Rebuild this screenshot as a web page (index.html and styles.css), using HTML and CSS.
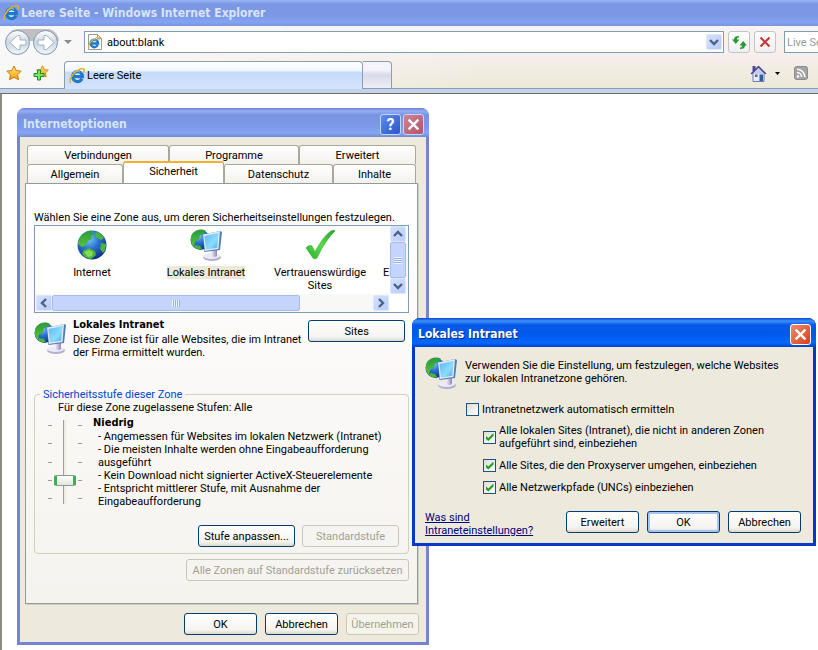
FILE: index.html
```html
<!DOCTYPE html>
<html lang="de">
<head>
  <meta charset="UTF-8" />
  <meta name="viewport" content="width=device-width, initial-scale=1.0" />
  <title>Leere Seite - Windows Internet Explorer</title>
  <link rel="stylesheet" href="styles.css">
</head>
<body>

  <!-- shared icons -->
  <svg class="icon-defs" width="0" height="0" aria-hidden="true">
    <defs>
      <radialGradient id="sea" cx="0.4" cy="0.3" r="0.75">
        <stop offset="0" stop-color="#7cc4f8" />
        <stop offset="0.45" stop-color="#2a72d0" />
        <stop offset="1" stop-color="#0a2a7c" />
      </radialGradient>
      <linearGradient id="land" x1="0" y1="0" x2="0" y2="1">
        <stop offset="0" stop-color="#2a9a3c" />
        <stop offset="1" stop-color="#58c438" />
      </linearGradient>
      <linearGradient id="screen" x1="0" y1="0" x2="1" y2="1">
        <stop offset="0" stop-color="#5cb4f4" />
        <stop offset="0.6" stop-color="#8cdcff" />
        <stop offset="1" stop-color="#4aa8ec" />
      </linearGradient>
      <linearGradient id="foot" x1="0" y1="0" x2="1" y2="0">
        <stop offset="0" stop-color="#f4f2fa" />
        <stop offset="1" stop-color="#9088b8" />
      </linearGradient>
      <linearGradient id="glass" x1="0" y1="0" x2="0" y2="1">
        <stop offset="0" stop-color="#ffffff" />
        <stop offset="0.5" stop-color="#ccd6e0" />
        <stop offset="1" stop-color="#eef8fc" />
      </linearGradient>
      <linearGradient id="gold" x1="0" y1="0" x2="0" y2="1">
        <stop offset="0" stop-color="#ffe878" />
        <stop offset="1" stop-color="#f49a10" />
      </linearGradient>
      <linearGradient id="tick" x1="0" y1="1" x2="1" y2="0">
        <stop offset="0" stop-color="#28b028" />
        <stop offset="0.5" stop-color="#5cdc4c" />
        <stop offset="1" stop-color="#2c9c2c" />
      </linearGradient>
    </defs>
    <symbol id="i-ie" viewBox="0 0 16 16">
      <circle cx="8.500" cy="8.500" r="4" fill="#d4ecfc" />
      <path d="M13 10.800A5 5 0 1 1 13.500 8.600H4.600" fill="none" stroke="#2379c8" stroke-width="3.200" />
      <path d="M4.200 5.600A5 5 0 0 1 11 4.200" fill="none" stroke="#6fc2f0" stroke-width="1.300" />
      <path d="M1.600 15C-.6 12.600 3 6.400 7.400 3.200 11 .6 14.600-.2 15.200 1.600c.3 1-.2 2-.8 3" fill="none" stroke="#e8b020" stroke-width="1.500" />
    </symbol>
    <symbol id="i-globe" viewBox="0 0 32 32">
      <circle cx="16" cy="16" r="14.500" fill="url(#sea)" />
      <path d="M5 7c3-4 8-6 11-5l2 3-3 2 1 3-4 2-2 4-4 2-4-3c0-3 1-6 3-8z" fill="url(#land)" />
      <path d="M20 3c4 1 7 4 8 6l-3 2-4-2-2-3zM25 14l5 1c0 4-1 7-3 9l-3-4zM8 21l5-2 6 3 1 4-5 4c-4 0-8-3-9-6z" fill="#4cb43c" />
      <path d="M8 23l5-2 4 2-1 4-4 1z" fill="#86da54" />
    </symbol>
    <symbol id="i-network" viewBox="0 0 32 32">
      <circle cx="10.500" cy="11" r="10" fill="url(#sea)" />
      <path d="M2 5c3-4 9-6 14-3l-2 3-4 1-1 4-4 3-1 5C1 15-.5 10 2 5z" fill="url(#land)" />
      <path d="M5 16l5 1 2 3c-3 1-6 0-8-2z" fill="#4cb43c" />
      <ellipse cx="22" cy="28.500" rx="9" ry="3.400" fill="#b4aed0" />
      <ellipse cx="21.500" cy="27" rx="8.500" ry="3" fill="#eceaf6" />
      <path d="M21 20h6v7c-1 1.200-5 1.200-6 0z" fill="url(#foot)" />
      <path d="M13 5.500L30 2l2 1-2 18-15.500 2z" fill="#4e7cb4" />
      <path d="M13 5.500L30 2l-1.500 18L15 22z" fill="#e0e8f2" />
      <path d="M14.500 7L28.500 4 27.200 18.700 16 20.400z" fill="url(#screen)" />
    </symbol>
    <symbol id="i-check" viewBox="0 0 32 32">
      <path d="M2 19c1-2 4-3 6-2l3 6C15 15 21 6 27 2c1-1 4-1 4 0C24 9 18 18 13 29c-1 1-3 1-4 0z" fill="url(#tick)" stroke="#38a838" stroke-width="0.600" />
    </symbol>
    <symbol id="i-star" viewBox="0 0 16 16">
      <path d="M8 1l2.200 4.500 5 .7-3.600 3.500.9 5L8 12.400 3.500 14.700l.9-5L.8 6.200l5-.7z" fill="url(#gold)" stroke="#c87c10" stroke-linejoin="round" />
    </symbol>
    <symbol id="i-close" viewBox="0 0 12 12">
      <path d="M1.500 1.500l9 9M10.500 1.500l-9 9" stroke="currentColor" stroke-width="2.200" />
    </symbol>
    <symbol id="i-arrow" viewBox="0 0 10 10">
      <path d="M1 3l4 4 4-4" fill="none" stroke="#4d6185" stroke-width="2.400" />
    </symbol>
  </svg>

  <div class="browser">
    <header class="browser-title">
      <svg class="ie"><use href="#i-ie" /></svg>
      <span>Leere Seite - Windows Internet Explorer</span>
    </header>

    <div class="chrome">
      <div class="nav-row">
        <button class="plain" aria-label="Zurück und Vorwärts">
          <svg width="56" height="28" viewBox="0 0 56 28">
            <path d="M13 1h32a13 13 0 0 1 10 12H2A13 13 0 0 1 13 1z" fill="#bfbfc4" />
            <g fill="url(#glass)" stroke="#8496ac">
              <circle cx="13.500" cy="14.500" r="12" />
              <circle cx="41.500" cy="14.500" r="12" />
            </g>
            <g fill="#fff" stroke="#a4b2c2">
              <path d="M6 14.500l7.500-7h2.500v4.500h6v5h-6v4.500h-2.500z" />
              <path d="M50 14.500l-7.500-7H40v4.500h-6v5h6v4.500h2.500z" />
            </g>
          </svg>
        </button>
        <button class="plain history" aria-label="Verlauf">
          <svg width="8" height="4" viewBox="0 0 8 4"><path d="M0 0h8L4 4z" fill="#8a8a8a" /></svg>
        </button>
        <div class="address">
          <svg width="16" height="18" viewBox="0 0 16 18">
            <path d="M1.500 1.500h9l4 4v11h-13z" fill="#fff" stroke="#999" />
            <path d="M10.500 1.500v4h4" fill="none" stroke="#999" />
            <use href="#i-ie" x="1" y="4" width="12" height="12" />
          </svg>
          <input type="text" value="about:blank" aria-label="Adresse">
          <button class="scroll-btn address-drop" aria-label="Adressen anzeigen"><svg><use href="#i-arrow" /></svg></button>
        </div>
        <button class="tool" aria-label="Aktualisieren">
          <svg width="15" height="13" viewBox="0 0 15 13" fill="#2a9a34">
            <path d="M7 1.500C5.500 1.500 5 2 5 3.500h2.500L3.800 8 0 3.500h2C2 1 3.500 0 7 0z" />
            <path d="M8 11.500c1.500 0 2-.5 2-2H7.500L11.200 5 15 9.500h-2c0 2.500-1.500 3.500-5 3.500z" />
          </svg>
        </button>
        <button class="tool stop" aria-label="Abbrechen"><svg width="12" height="12"><use href="#i-close" /></svg></button>
        <input class="search" type="text" placeholder="Live Search" aria-label="Suche">
      </div>

      <div class="tab-row">
        <button class="plain" aria-label="Favoritencenter"><svg width="16" height="16"><use href="#i-star" /></svg></button>
        <button class="plain add-favorite" aria-label="Zu Favoriten hinzufügen">
          <svg width="16" height="16" viewBox="0 0 16 16">
            <use href="#i-star" x="3" y="0" width="13" height="13" />
            <path d="M4.500 5h3v3.500H11v3H7.500V15h-3v-3.500H1v-3h3.500z" fill="#7ce060" stroke="#1e8c1e" />
          </svg>
        </button>
        <button class="page-tab"><svg class="ie"><use href="#i-ie" /></svg>Leere Seite</button>
        <button class="new-tab" aria-label="Neue Registerkarte"></button>
        <div class="page-tools">
          <button class="plain" aria-label="Startseite">
            <svg width="17" height="17" viewBox="0 0 17 17">
              <path d="M3 8l5.500-6L14 8v8.500H3z" fill="#e8ecf8" stroke="#6c7cb8" />
              <path d="M2.500 1h3v4l-3 2.500zM.5 8.500l8-8 8 8-1.500 1-6.500-6.500L2 9.500z" fill="#4a4a94" />
              <path d="M8.500 3l6 6H2.500z" fill="#c4ccec" />
              <path d="M9.500 9.500h3.500v6.500H9.500z" fill="#2860a0" />
              <path d="M5 9.500h2.500V12H5z" fill="#666" />
            </svg>
          </button>
          <button class="plain" aria-label="Startseitenmenü">
            <svg width="5" height="3" viewBox="0 0 5 3"><path d="M0 0h5L2.500 3z" /></svg>
          </button>
          <button class="plain feed" aria-label="Feeds">
            <svg width="14" height="14" viewBox="0 0 14 14">
              <rect x="0.500" y="0.500" width="13" height="13" rx="2" fill="#a4a4a4" stroke="#8c8c8c" />
              <circle cx="4" cy="10.500" r="1.300" fill="#fff" />
              <path d="M3 6.500a4.500 4.500 0 0 1 4.500 4.500M3 3.200A7.800 7.800 0 0 1 10.800 11" fill="none" stroke="#fff" stroke-width="1.500" />
            </svg>
          </button>
        </div>
      </div>
    </div>
    <main class="page"></main>
  </div>

  <section class="window options" aria-label="Internetoptionen">
    <header class="window-title">
      <h1>Internetoptionen</h1>
      <button class="caption-btn" aria-label="Hilfe">?</button>
      <button class="caption-btn caption-close" aria-label="Schließen"><svg width="13" height="13"><use href="#i-close" /></svg></button>
    </header>
    <div class="options-body">
      <div class="tabs tabs-back">
        <button>Verbindungen</button>
        <button>Programme</button>
        <button>Erweitert</button>
      </div>
      <div class="tabs tabs-front">
        <button>Allgemein</button>
        <button class="active">Sicherheit</button>
        <button>Datenschutz</button>
        <button>Inhalte</button>
      </div>

      <div class="panel">
        <p>Wählen Sie eine Zone aus, um deren Sicherheitseinstellungen festzulegen.</p>

        <div class="zones">
          <ul class="zone-list">
            <li><svg><use href="#i-globe" /></svg><span>Internet</span></li>
            <li class="selected"><svg><use href="#i-network" /></svg><span>Lokales Intranet</span></li>
            <li><svg><use href="#i-check" /></svg><span>Vertrauenswürdige<br>Sites</span></li>
            <li><svg></svg><span>Eingeschränkte Sites</span></li>
          </ul>
          <div class="vscroll">
            <button class="scroll-btn up" aria-label="Nach oben"><svg><use href="#i-arrow" /></svg></button>
            <div class="thumb"></div>
            <button class="scroll-btn" aria-label="Nach unten"><svg><use href="#i-arrow" /></svg></button>
          </div>
          <div class="hscroll">
            <button class="scroll-btn left" aria-label="Nach links"><svg><use href="#i-arrow" /></svg></button>
            <div class="thumb"></div>
            <button class="scroll-btn right" aria-label="Nach rechts"><svg><use href="#i-arrow" /></svg></button>
          </div>
        </div>

        <div class="zone-info">
          <svg class="big-icon"><use href="#i-network" /></svg>
          <div class="zone-text">
            <h2>Lokales Intranet</h2>
            <p>Diese Zone ist für alle Websites, die im Intranet<br>der Firma ermittelt wurden.</p>
          </div>
          <button class="btn wide">Sites</button>
        </div>

        <fieldset class="level">
          <legend>Sicherheitsstufe dieser Zone</legend>
          <label for="level">Für diese Zone zugelassene Stufen: Alle</label>
          <div class="level-row">
            <div class="slider">
              <div class="ticks"><i></i><i></i><i></i><i></i><i></i></div>
              <input type="range" id="level" min="0" max="4" value="1">
              <div class="ticks"><i></i><i></i><i></i><i></i><i></i></div>
            </div>
            <div>
              <h2>Niedrig</h2>
              <p class="level-text">
                - Angemessen für Websites im lokalen Netzwerk (Intranet)<br>
                - Die meisten Inhalte werden ohne Eingabeaufforderung<br>
                ausgeführt<br>
                - Kein Download nicht signierter ActiveX-Steuerelemente<br>
                - Entspricht mittlerer Stufe, mit Ausnahme der<br>
                Eingabeaufforderung
              </p>
            </div>
          </div>
          <div class="level-buttons">
            <button class="btn wide">Stufe anpassen...</button>
            <button class="btn wide" disabled>Standardstufe</button>
          </div>
        </fieldset>
        <button class="btn reset" disabled>Alle Zonen auf Standardstufe zurücksetzen</button>
      </div>

      <footer class="buttons">
        <button class="btn">OK</button>
        <button class="btn">Abbrechen</button>
        <button class="btn" disabled>Übernehmen</button>
      </footer>
    </div>
  </section>

  <section class="window intranet" aria-label="Lokales Intranet">
    <header class="window-title">
      <h1>Lokales Intranet</h1>
      <button class="caption-btn caption-close" aria-label="Schließen"><svg width="13" height="13"><use href="#i-close" /></svg></button>
    </header>
    <div class="intranet-body">
      <div class="intro">
        <svg class="big-icon"><use href="#i-network" /></svg>
        <p>Verwenden Sie die Einstellung, um festzulegen, welche Websites<br>zur lokalen Intranetzone gehören.</p>
      </div>
      <div class="checks">
        <label><input type="checkbox">Intranetnetzwerk automatisch ermitteln</label>
        <label class="sub"><input type="checkbox" checked><span>Alle lokalen Sites (Intranet), die nicht in anderen Zonen<br>aufgeführt sind, einbeziehen</span></label>
        <label class="sub"><input type="checkbox" checked>Alle Sites, die den Proxyserver umgehen, einbeziehen</label>
        <label class="sub"><input type="checkbox" checked>Alle Netzwerkpfade (UNCs) einbeziehen</label>
      </div>
      <footer class="buttons">
        <a href="#">Was sind<br>Intraneteinstellungen?</a>
        <button class="btn">Erweitert</button>
        <button class="btn default">OK</button>
        <button class="btn">Abbrechen</button>
      </footer>
    </div>
  </section>

</body>
</html>
```

FILE: styles.css
```css
* {
  box-sizing: border-box;
}
body {
  margin: 0;
  height: 100vh;
  overflow: hidden;
  position: relative;
  color: #000;
  font-family: Roboto, Tahoma, sans-serif;
  font-size: 11px;
  line-height: 13px;
}
h1, h2, p, ul, fieldset {
  margin: 0;
  padding: 0;
}
h1, h2, .browser-title {
  font-family: "DejaVu Sans Condensed", Tahoma, sans-serif;
  font-weight: bold;
}
h2 {
  font-size: 11px;
  line-height: 13px;
}
svg {
  display: block;
  flex: none;
}
button, input {
  font: inherit;
  color: inherit;
  margin: 0;
}
button {
  padding: 0;
}
.icon-defs {
  position: absolute;
}
.plain {
  border: 0;
  background: none;
}
.ie {
  width: 16px;
  height: 16px;
}

/* browser window */
.browser {
  display: flex;
  flex-direction: column;
  height: 100%;
  background: #c4d2ec;
}
.browser-title {
  display: flex;
  align-items: center;
  gap: 2px;
  height: 26px;
  padding-left: 3px;
  background: linear-gradient(#9ab8f6 0, #7a98e4 4px, #7c98e4 16px, #84a4f4 22px, #7a94dc);
  color: #d8e4f8;
  font-size: 12px;
}
.chrome {
  background: linear-gradient(to right, #f8f8f8, rgba(248, 248, 248, 0) 60%), linear-gradient(#f8f4f2, #f6eeea 50%, #ece9d8);
}
.nav-row {
  display: flex;
  align-items: center;
  height: 32px;
  padding-left: 4px;
}
.history {
  padding: 0 12px 0 4px;
}
.address {
  display: flex;
  flex: 1;
  align-items: center;
  height: 22px;
  padding: 0 1px 0 2px;
  border: 1px solid #7f9db9;
  background: #fff;
}
.address input {
  flex: 1;
  min-width: 0;
  padding: 0 4px;
  border: 0;
  background: none;
}
.address-drop {
  height: 18px;
}
.tool {
  display: flex;
  align-items: center;
  justify-content: center;
  width: 22px;
  height: 22px;
  margin-left: 4px;
  border: 1px solid #c0c4cc;
  border-radius: 3px;
  background: linear-gradient(#fff, #f0eeee);
}
.stop {
  color: #c43c3c;
}
/* runs off the right edge of the window */
.search {
  width: 34px;
  height: 22px;
  margin-left: 8px;
  padding: 0 0 0 2px;
  border: 1px solid #7f9db9;
  border-right: 0;
  background: #fff;
}
.search::placeholder {
  color: #999;
}
.tab-row {
  display: flex;
  align-items: center;
  height: 31px;
  padding-left: 6px;
  border-bottom: 1px solid #8e9cb0;
}
.add-favorite {
  margin: 0 15px 0 11px;
}
.page-tab {
  display: flex;
  align-items: center;
  align-self: flex-end;
  gap: 2px;
  width: 299px;
  height: 28px;
  margin-bottom: -1px;
  padding-left: 4px;
  border: 1px solid #8e9cb0;
  border-bottom: 0;
  border-radius: 4px 4px 0 0;
  background: linear-gradient(#fff 0, #f0f6fe 9px, #c4dafc 10px, #d4e4fc);
}
.new-tab {
  align-self: flex-end;
  width: 29px;
  height: 27px;
  border: 1px solid #8e9cb0;
  border-left: 0;
  border-bottom: 0;
  border-radius: 0 4px 0 0;
  background: linear-gradient(#f4f4fa 30%, #d8daea 50%, #eeeef6);
}
.page-tools {
  display: flex;
  align-items: center;
  gap: 8px;
  margin-left: auto;
  padding-right: 10px;
}
.feed {
  margin-left: 6px;
}
.page {
  flex: 1;
  margin-top: 4px;
  border-top: 1px solid #6f6f60;
  border-left: 2px solid #8c8c84;
  background: #fff;
}

/* dialog windows */
.window {
  position: absolute;
  border-radius: 8px 8px 0 0;
}
.window-title {
  display: flex;
  align-items: center;
  gap: 2px;
  height: 29px;
  margin: 0 -3px;
  padding: 3px 5px 0 6px;
  border-radius: 8px 8px 0 0;
}
.window-title h1 {
  flex: 1;
  font-size: 12px;
}
.caption-btn {
  display: flex;
  align-items: center;
  justify-content: center;
  width: 21px;
  height: 21px;
  border: 1px solid #fff;
  border-radius: 3px;
  background: linear-gradient(135deg, #5c8cf0, #2c54c8);
  color: #fff;
  font-size: 16px;
  font-weight: bold;
}
.caption-close {
  background: linear-gradient(135deg, #ec8c6c, #d8401c);
}
.options {
  left: 17px;
  top: 108px;
  width: 412px;
  padding: 0 3px 3px;
  background: #7484d0;
}
.options .window-title {
  background: linear-gradient(#6c80cc 0, #94aef4 3px, #7894e0 7px, #7c9ae8 18px, #84a4f4 25px, #748cd4);
  color: #d8e4f8;
}
.options .caption-btn {
  border-color: #c8d4f8;
}
.options .caption-close {
  background: linear-gradient(135deg, #cc8494, #b45468);
}
.options-body {
  padding: 8px 8px 7px 5px;
  background: #edeadd;
}
.tabs {
  display: grid;
  padding: 0 2px;
}
.tabs button {
  height: 19px;
  border: 1px solid #a8a89c;
  border-bottom: 0;
  border-radius: 3px 3px 0 0;
  background: linear-gradient(#fff, #f2f1ec);
}
.tabs-back {
  grid-template-columns: 142fr 130fr 117fr;
}
.tabs-front {
  grid-template-columns: 96fr 101fr 109fr 83fr;
}
.tabs-front .active {
  height: 22px;
  margin: -3px 0 -1px;
  padding-bottom: 3px;
  border-top: 2px solid #f0b030;
  background: #fff;
  z-index: 1;
}
.panel {
  padding: 27px 8px 22px;
  border: 1px solid #919b9c;
  box-shadow: 1px 1px #d0cec0;
  background: linear-gradient(#fff 0, #fcfbfa 30%, #f5f3ee);
}

/* zone list */
.zones {
  display: grid;
  grid-template-columns: 1fr 18px;
  grid-template-rows: 68px 18px;
  margin-top: 1px;
  border: 1px solid #7f9db9;
  background: #fff;
}
.zone-list {
  display: flex;
  overflow: hidden;
  list-style: none;
}
.zone-list li {
  display: flex;
  flex: 0 0 114px;
  flex-direction: column;
  align-items: center;
  gap: 5px;
  padding-top: 3px;
  text-align: center;
  white-space: nowrap;
}
.zone-list svg {
  width: 32px;
  height: 32px;
}
.selected span {
  background: #ece9d8;
}
.vscroll, .hscroll {
  display: flex;
  background: #f8f8f6;
}
.vscroll {
  flex-direction: column;
}
.scroll-btn {
  display: flex;
  flex: none;
  align-items: center;
  justify-content: center;
  width: 16px;
  height: 16px;
  border: 1px solid #dce6fc;
  border-radius: 2px;
  background: linear-gradient(135deg, #d4e0fe, #b8ccf8);
}
.scroll-btn svg {
  width: 10px;
  height: 10px;
}
.up svg {
  transform: rotate(180deg);
}
.left svg {
  transform: rotate(90deg);
}
.right svg {
  transform: rotate(-90deg);
}
.right {
  margin-left: auto;
}
.thumb {
  display: flex;
  align-items: center;
  justify-content: center;
  border: 1px solid #a8bcec;
  border-radius: 2px;
  background: #c4d4fc;
}
.thumb::after {
  content: "";
  width: 8px;
  height: 7px;
  background: repeating-linear-gradient(#eef4fe 0 1px, #98b0e8 1px 2px);
}
.vscroll .thumb {
  width: 16px;
  flex: 1;
}
.hscroll {
  padding: 1px;
}
.hscroll .thumb {
  flex: 0 1 248px;
}
.hscroll .thumb::after {
  background: repeating-linear-gradient(to right, #eef4fe 0 1px, #98b0e8 1px 2px);
}

.zone-info {
  display: flex;
  gap: 7px;
  height: 75px;
  padding: 5px 4px 0 0;
}
.zone-info .btn {
  margin-top: 2px;
}
.zone-text {
  flex: 1;
  white-space: nowrap;
}
.zone-text p {
  margin-top: 2px;
}
.big-icon {
  width: 32px;
  height: 32px;
  margin-top: 4px;
}
.btn {
  width: 73px;
  height: 22px;
  border: 1px solid #003c74;
  border-radius: 3px;
  background: linear-gradient(#fff, #f4f3ee 80%, #dcd8cc);
  white-space: nowrap;
}
.btn:disabled {
  border-color: #c9c7ba;
  background: #f5f4ea;
  color: #a1a192;
}
.panel .btn:disabled {
  background: #f6f4f0;
}
.wide {
  width: 97px;
}
.default {
  box-shadow: inset 0 0 0 2px #a8c4f0;
}

/* security level */
.level {
  padding: 0 9px 6px 10px;
  border: 1px solid #d0d0bf;
  border-radius: 4px;
}
.level legend {
  margin-left: -5px;
  padding: 0 3px;
  color: #0046d5;
}
.level label {
  display: block;
  margin-left: 13px;
}
.level-row {
  display: flex;
  gap: 11px;
}
.level-row h2 {
  margin-top: 2px;
}
.level-text {
  margin: 1px 0 0 5px;
  white-space: nowrap;
}
.slider {
  display: flex;
  gap: 2px;
  margin: 6px 0 0 3px;
}
.ticks {
  display: flex;
  flex-direction: column;
  justify-content: space-between;
  height: 84px;
  padding: 5px 0;
}
.ticks i {
  width: 4px;
  height: 1px;
  background: #9c9a8c;
}
.slider input {
  appearance: none;
  writing-mode: vertical-lr;
  direction: rtl;
  width: 22px;
  height: 84px;
  background: linear-gradient(to right, transparent 9px, #a0a098 9px 10px, #ecebe4 10px 12px, transparent 12px);
}
.slider input::-webkit-slider-thumb {
  appearance: none;
  width: 22px;
  height: 11px;
  border: 1px solid #8a9a94;
  border-right: 3px solid #3cb054;
  border-left: 3px solid #3cb054;
  border-radius: 2px;
  background: linear-gradient(#fff, #e4e4de);
}
.level-buttons {
  display: flex;
  justify-content: flex-end;
  gap: 7px;
  margin-top: 17px;
}
.reset {
  display: block;
  width: 223px;
  margin: 5px 0 0 auto;
}
.buttons {
  display: flex;
  justify-content: flex-end;
  gap: 8px;
}
.options .buttons {
  margin: 9px -1px 0 0;
}

/* intranet dialog */
.intranet {
  left: 412px;
  top: 318px;
  width: 404px;
  padding: 0 3px 3px;
  background: #0838c8;
}
.intranet .window-title {
  background: linear-gradient(#0848c8 0, #3c90fc 3px, #0858e8 7px, #0058ec 16px, #0468fc 25px, #0440c8);
  color: #fff;
  text-shadow: 1px 1px #082c88;
}
.intranet-body {
  padding: 10px 12px 6px 10px;
  background: #edeadd;
}
.intro {
  display: flex;
  gap: 8px;
}
.intro .big-icon {
  margin-top: 0;
}
.intro p {
  margin-top: 2px;
}
.checks {
  display: flex;
  flex-direction: column;
  gap: 9px;
  padding: 14px 0 17px 41px;
}
.checks label {
  display: flex;
  align-items: center;
  gap: 3px;
}
.checks .sub {
  margin-left: 17px;
}
.checks label:first-child {
  margin-bottom: -1px;
}
.checks input {
  appearance: none;
  display: flex;
  flex: none;
  align-items: center;
  justify-content: center;
  width: 13px;
  height: 13px;
  border: 1px solid #1c5180;
  background: linear-gradient(135deg, #dcdcd7, #fff);
}
.checks input:checked::before {
  content: "";
  width: 8px;
  height: 8px;
  background: #21a121;
  clip-path: polygon(0 30%, 35% 62%, 100% 0, 100% 38%, 35% 100%, 0 68%);
}
.buttons a {
  margin-right: auto;
  color: #000080;
}
```
